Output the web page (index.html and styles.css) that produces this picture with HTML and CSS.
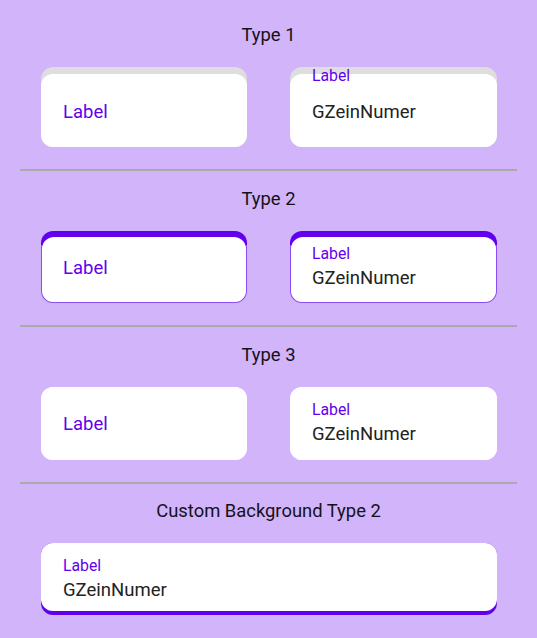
FILE: index.html
```html
<!DOCTYPE html>
<html>
<head>
<meta charset="utf-8">
<link rel="stylesheet" href="styles.css">
</head>
<body>
<div class="page">
  <section class="section first">
    <h2 class="title">Type 1</h2>
    <div class="row">
      <div class="card t1">
        <div class="inner single"><span class="label-lg">Label</span></div>
      </div>
      <div class="card t1">
        <span class="float-label">Label</span>
        <div class="inner single"><span class="value">GZeinNumer</span></div>
      </div>
    </div>
  </section>
  <hr class="divider">
  <section class="section">
    <h2 class="title">Type 2</h2>
    <div class="row">
      <div class="card t2">
        <div class="inner single"><span class="label-lg">Label</span></div>
      </div>
      <div class="card t2">
        <div class="inner double">
          <span class="label-sm">Label</span>
          <span class="value">GZeinNumer</span>
        </div>
      </div>
    </div>
  </section>
  <hr class="divider">
  <section class="section">
    <h2 class="title">Type 3</h2>
    <div class="row">
      <div class="card t3">
        <div class="inner single"><span class="label-lg">Label</span></div>
      </div>
      <div class="card t3">
        <div class="inner double">
          <span class="label-sm">Label</span>
          <span class="value">GZeinNumer</span>
        </div>
      </div>
    </div>
  </section>
  <hr class="divider">
  <section class="section">
    <h2 class="title">Custom Background Type 2</h2>
    <div class="row wide">
      <div class="card custom">
        <div class="inner double">
          <span class="label-sm">Label</span>
          <span class="value">GZeinNumer</span>
        </div>
      </div>
    </div>
  </section>
</div>
</body>
</html>
```
FILE: styles.css
```css
* { box-sizing: border-box; }
html, body {
  margin: 0;
  padding: 0;
  background: #d1b4fa;
  font-family: Roboto, "Noto Sans", sans-serif;
}
.page {
  width: 537px;
  height: 638px;
  padding-top: 24px;
}
.section {
  padding: 0 41px 22px 41px;
}
.title {
  margin: 0 0 21px 0;
  font-size: 18.4px;
  font-weight: 400;
  line-height: 22px;
  color: #141218;
  text-align: center;
}
.row {
  display: grid;
  grid-template-columns: 206px 207px;
  column-gap: 43px;
}
.row.wide { grid-template-columns: 456px; }
.card {
  position: relative;
  border-radius: 12px;
  display: flex;
  flex-direction: column;
}
.inner {
  flex: 1;
  background: #fff;
  border-radius: 12px;
  display: flex;
  flex-direction: column;
  justify-content: center;
  padding-left: 22px;
}
.card.t1 { height: 80px; background: #dedede; }
.card.t1 .inner { margin-top: 7px; padding-top: 3px; }
.card.t2 {
  height: 72px;
  background: linear-gradient(#6200ee 0 14px, #8a4cf3 14px);
}
.card.t2 .inner { margin: 6px 1px 1px 1px; padding-bottom: 4px; padding-left: 21px; border-radius: 12px 12px 11px 11px; }
.card.t3 { height: 73px; background: #fff; }
.card.custom { height: 72px; background: #6200ee; }
.card.custom .inner { margin: 0 0 4px 0; padding-top: 6px; }
.label-lg {
  font-size: 18.5px;
  line-height: 24px;
  color: #6200ee;
}
.label-sm {
  font-size: 15.8px;
  line-height: 20px;
  color: #6200ee;
}
.value {
  font-size: 18.5px;
  line-height: 28px;
  color: #222;
}
.float-label {
  position: absolute;
  top: 0;
  left: 22px;
  font-size: 15.8px;
  line-height: 18px;
  color: #6200ee;
}
.divider {
  margin: 0 20px;
  border: 0;
  height: 2px;
  background: #aaaaaa;
}
.divider + .section { padding-top: 17px; }
.divider + .section:last-child { padding-top: 16px; }
```
